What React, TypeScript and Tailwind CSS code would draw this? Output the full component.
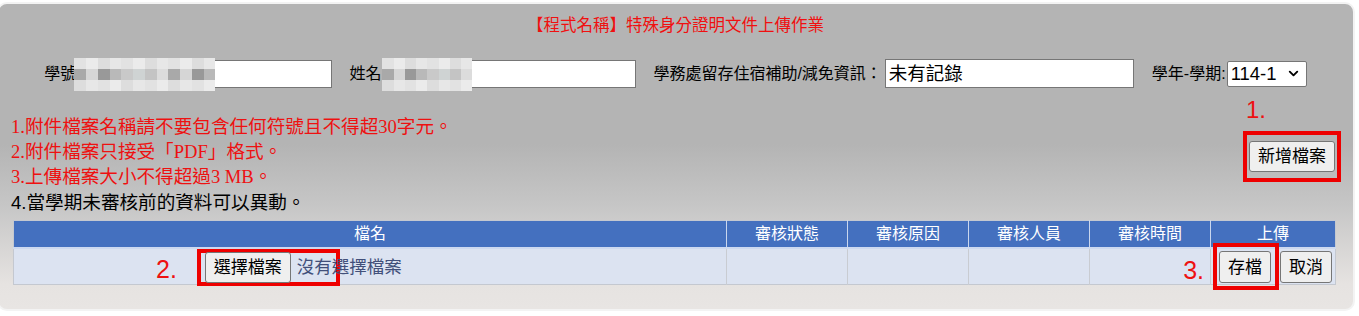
import { ChevronDown } from 'lucide-react';

const sans = "font-['Liberation_Sans','Noto_Sans_CJK_TC',sans-serif]";

const btn =
  'h-[31px] px-[8px] bg-[#efefef] border border-[#767676] rounded-[3px] text-[17px] leading-none text-black flex items-center';

function Mosaic({ width }: { width: number }) {
  // pixelated blur over the personal data
  const cols = Math.floor(width / 12);
  const shades = ['#d6d6d6', '#c4c4c4', '#b9b9b9', '#a9a9a9', '#cfd3d3', '#999999', '#dcdcdc', '#c9c9c9'];
  return (
    <div className="flex flex-col h-[34px]">
      {[0, 1, 2].map((r) => (
        <div key={r} className="flex h-[11px]">
          {Array.from({ length: cols }).map((_, c) => (
            <div
              key={c}
              className="w-[12px] h-full"
              style={{
                background:
                  r === 1
                    ? shades[(c * 5 + 3) % shades.length]
                    : ['#e2e2e2', '#ebebeb', '#dddddd', '#e7e7e7'][(c + r) % 4],
              }}
            />
          ))}
        </div>
      ))}
    </div>
  );
}

export default function App() {
  return (
    <div className={`min-h-screen bg-white pt-[2px] pr-[4px] ${sans}`}>
      <div className="ml-[-3px] h-[309px] rounded-[10px] border-2 border-[#f3f3f3] bg-[linear-gradient(to_bottom,#b4b4b4_0%,#b4b4b4_46%,#c6c6c6_66%,#e6e3e1_92%,#e8e5e3_100%)] pl-[15px] pr-[16px]">
        {/* Title */}
        <div className="pt-[10px] text-center text-[16.5px] leading-[22px] text-[#f01010]">
          【程式名稱】特殊身分證明文件上傳作業
        </div>

        {/* Info row */}
        <div className="mt-[23px] flex items-center justify-center text-[16px] text-black">
          <span className="leading-none">學號</span>
          <div className="relative ml-[-2px] h-[28px] w-[258px] border border-[#767676] bg-white">
            <div className="absolute left-[-1px] top-[-3px] overflow-hidden w-[141px]">
              <Mosaic width={144} />
            </div>
          </div>
          <span className="ml-[17px] leading-none">姓名</span>
          <div className="relative ml-[2px] h-[28px] w-[253px] border border-[#767676] bg-white">
            <div className="absolute left-[-2px] top-[-3px] overflow-hidden w-[90px]">
              <Mosaic width={96} />
            </div>
          </div>
          <span className="ml-[17px] leading-none">學務處留存住宿補助/減免資訊：</span>
          <div className="ml-[3px] h-[29px] w-[249px] border border-[#767676] bg-white flex items-center px-[3px] text-[18.5px]">
            未有記錄
          </div>
          <span className="ml-[18px] leading-none">學年-學期:</span>
          <div className="ml-[1px] h-[26px] w-[80px] border border-[#767676] rounded-[2px] bg-white flex items-center justify-between pl-[3px] pr-[5px] text-[18.5px]">
            114-1
            <ChevronDown size={15} strokeWidth={3} />
          </div>
        </div>

        {/* Notes + add button */}
        <div className="mt-[26px] flex justify-between">
          <div className="ml-[-3px]">
            <div className="font-['Liberation_Serif','Noto_Sans_CJK_TC',serif] text-[18.6px] leading-[25px] text-[#ee1111]">
              <div>1.附件檔案名稱請不要包含任何符號且不得超30字元。</div>
              <div>2.附件檔案只接受「PDF」格式。</div>
              <div>3.上傳檔案大小不得超過3 MB。</div>
            </div>
            <div className="text-[18.6px] leading-[27px] text-black">4.當學期未審核前的資料可以異動。</div>
          </div>
          <div className="flex flex-col items-start mr-[-4px] mt-[-18px]">
            <span className="ml-[3px] text-[24px] leading-[28px] text-[#ee1111]">1.</span>
            <div className="mt-[7px] border-[4px] border-[#ee0000] px-[2px] pt-[6px] pb-[6px]">
              <button className={btn}>新增檔案</button>
            </div>
          </div>
        </div>

        {/* Table */}
        <table className="mt-[4px] ml-[-1px] w-[1323px] border-collapse border border-[#c4c8d0] text-[16px]">
          <thead>
            <tr className="h-[27px] bg-[#4470bf] text-white">
              <th className="w-[713px] border-r border-[#c9d6ee] font-normal">檔名</th>
              <th className="w-[121px] border-r border-[#c9d6ee] font-normal">審核狀態</th>
              <th className="w-[121px] border-r border-[#c9d6ee] font-normal">審核原因</th>
              <th className="w-[121px] border-r border-[#c9d6ee] font-normal">審核人員</th>
              <th className="w-[121px] border-r border-[#c9d6ee] font-normal">審核時間</th>
              <th className="font-normal">上傳</th>
            </tr>
          </thead>
          <tbody>
            <tr className="bg-[#dce3f1] border-t-2 border-[#cdd9f0]">
              <td className="h-[35px] p-0 border-r border-[#c9ccd2]">
                <div className="flex items-center h-[35px] pl-[142px]">
                  <span className="mt-[6px] text-[25px] leading-none text-[#ee1111]">2.</span>
                  <div className="ml-[20px] mt-[3px] flex shrink-0 items-center border-[4px] border-[#ee0000] h-[37px] w-[143px] pl-[4px]">
                    <button className={`${btn} h-[29px] shrink-0`}>選擇檔案</button>
                    <span className="ml-[6px] whitespace-nowrap text-[17.5px] text-[#42507a]">沒有選擇檔案</span>
                  </div>
                </div>
              </td>
              <td className="p-0 border-r border-[#c9ccd2]" />
              <td className="p-0 border-r border-[#c9ccd2]" />
              <td className="p-0 border-r border-[#c9ccd2]" />
              <td className="relative p-0 border-r border-[#c9ccd2]">
                <span className="absolute right-[6px] top-[9px] text-[25px] leading-none text-[#ee1111]">3.</span>
              </td>
              <td className="p-0">
                <div className="flex items-center h-[35px] pl-[2px]">
                  <div className="shrink-0 border-[4px] border-[#ee0000] h-[47px] w-[66px] flex items-center pl-[2px] pt-[2px]">
                    <button className={`${btn} h-[32px] shrink-0`}>存檔</button>
                  </div>
                  <button className={`${btn} h-[32px] ml-[1px] mt-[2px]`}>取消</button>
                </div>
              </td>
            </tr>
          </tbody>
        </table>
      </div>
    </div>
  );
}
